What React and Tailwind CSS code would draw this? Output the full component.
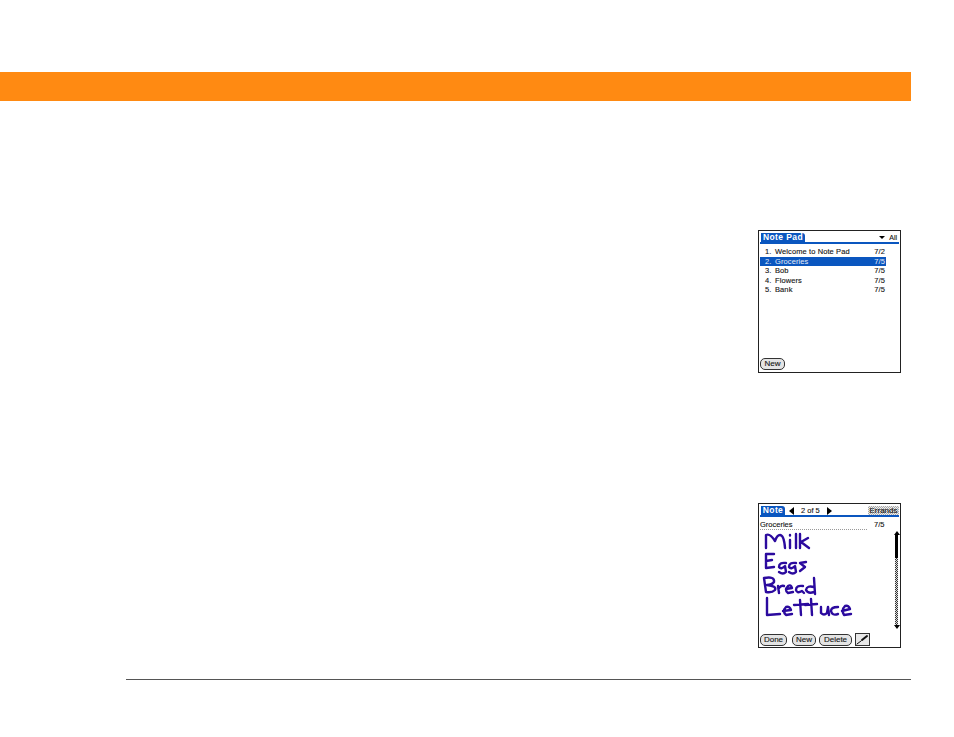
const F = "font-['Liberation_Sans',Arial,sans-serif]";
const T = "[-webkit-text-stroke:0.12px_#222]";

function Btn({ children, className = "" }) {
  return (
    <div className={`flex h-[12px] items-center justify-center rounded-[5px] border border-[#333] bg-[#e4e4e4] text-[8px] leading-none text-[#111] ${T} ${className}`}>
      {children}
    </div>
  );
}

function Row({ n, name, date, active }) {
  return (
    <div className={`flex h-[9.6px] items-center pl-[5px] pr-[1px] text-[7.5px] leading-none tracking-[0.1px] ${active ? "bg-[#0a56bf] text-[#e6edf8]" : `text-[#111] ${T}`}`}>
      <span className="w-[10px]">{n}.</span>
      <span className="flex-1">{name}</span>
      <span>{date}</span>
    </div>
  );
}

function Handwriting() {
  return (
    <svg width="125" height="100" viewBox="0 0 125 100" className="ml-[1px] block" fill="none" stroke="#2b0a9e" strokeWidth="2.4" strokeLinecap="round" strokeLinejoin="round">
      <path d="M5 18 L5 5 Q9 3 14 11 Q16 5 19 5 Q23 5 24 18" />
      <path d="M29 10 L29 18 M29 5 L29 5.5 M35 4 L35 18 M39 4 L39 18 M47 8 L40 12 L48 18" />
      <path d="M13 24 L5 24 L5 38 L13 37 M5 31 L11 30" />
      <path d="M25 33 Q18 32 18 37 Q20 40 24 36 L25 42 Q22 45 18 42 M35 33 Q28 32 28 37 Q30 40 34 36 L35 42 Q32 45 28 42 M45 32 L39 33 L44 37 L39 41" />
      <path d="M3 48 L5 62 M3 48 Q14 46 13 52 Q11 55 6 55 Q16 56 14 60 Q11 63 5 62" />
      <path d="M17 56 L18 63 M18 58 Q20 55 23 56 M25 59 L31 58 Q30 54 27 56 Q23 60 27 63 L32 62 M42 56 Q35 55 35 60 Q36 64 41 61 L43 63 M53 48 L54 64 M53 57 Q46 55 45 60 Q47 64 53 62" />
      <path d="M6 68 L6 85 L19 84" />
      <path d="M22 81 L30 80 Q29 76 25 77 Q21 81 25 85 L31 84 M39 70 L40 85 M33 75 L47 74 M50 69 L51 85 M44 75 L56 74 M60 77 L60 83 Q63 86 66 83 L67 77 L68 85 M77 77 Q70 77 70 81 Q71 86 77 84 M81 81 L89 79 Q88 75 84 76 Q80 80 83 85 L90 84" />
    </svg>
  );
}

function Scrollbar() {
  return (
    <div className="flex w-[5px] flex-col items-center pt-[1px]">
      <div className="h-0 w-0 border-x-[3px] border-b-[4px] border-x-transparent border-b-black" />
      <div className="h-[23px] w-[3px] bg-black" />
      <div className="h-[67px] w-[3px] bg-[repeating-conic-gradient(#333_0_25%,#ddd_0_50%)] bg-[length:2px_2px]" />
      <div className="h-0 w-0 border-x-[3px] border-t-[4px] border-x-transparent border-t-black" />
    </div>
  );
}

export default function App() {
  return (
    <div className={`h-[737px] w-[954px] overflow-hidden bg-white ${F}`}>
      <div className="h-[72px]" />
      <div className="h-[29px] w-[911px] bg-[#ff8a12]" />

      <div className="ml-[758px] mt-[129px] flex h-[143px] w-[143px] flex-col border border-[#222] px-[1px] pt-[2px]">
        <div className="flex h-[11px] items-stretch border-b-[2px] border-[#0a56bf] pl-[1px]">
          <div className="flex w-[44px] items-center justify-center rounded-tr-[3px] bg-[#0a56bf] text-[8.5px] font-bold leading-none tracking-[0.4px] text-white">Note Pad</div>
          <div className={`flex flex-1 items-center justify-end gap-[4px] pr-[2px] text-[7px] leading-none text-[#111] ${T}`}>
            <div className="h-0 w-0 border-x-[3px] border-t-[3px] border-x-transparent border-t-black" />
            <span>All</span>
          </div>
        </div>
        <div className="mt-[3px] w-[126px]">
          <Row n="1" name="Welcome to Note Pad" date="7/2" />
          <Row n="2" name="Groceries" date="7/5" active />
          <Row n="3" name="Bob" date="7/5" />
          <Row n="4" name="Flowers" date="7/5" />
          <Row n="5" name="Bank" date="7/5" />
        </div>
        <div className="mt-[63px] flex">
          <Btn className="w-[25px]">New</Btn>
        </div>
      </div>

      <div className="ml-[758px] mt-[130px] flex h-[145px] w-[143px] flex-col border border-[#222] px-[1px] pt-[2px]">
        <div className="flex h-[11px] items-stretch border-b-[2px] border-[#0a56bf] pl-[1px]">
          <div className="flex w-[24px] items-center justify-center rounded-tr-[3px] bg-[#0a56bf] text-[8.5px] font-bold leading-none tracking-[0.4px] text-white">Note</div>
          <div className={`ml-[4px] flex items-center gap-[7px] text-[7.5px] leading-none text-[#111] ${T}`}>
            <div className="h-0 w-0 border-y-[4px] border-r-[5px] border-y-transparent border-r-black" />
            <span>2 of 5</span>
            <div className="h-0 w-0 border-y-[4px] border-l-[5px] border-y-transparent border-l-black" />
          </div>
          <div className={`ml-auto flex w-[31px] items-center justify-center bg-[repeating-conic-gradient(#aaa_0_25%,#eee_0_50%)] bg-[length:2px_2px] text-[8px] leading-none text-[#111] ${T}`}>Errands</div>
        </div>
        <div className={`mt-[3px] flex h-[10px] items-center text-[7.5px] leading-none text-[#111] ${T}`}>
          <span className="flex h-full w-[107px] items-center border-b border-dotted border-[#999]">Groceries</span>
          <span className="ml-[7px]">7/5</span>
        </div>
        <div className="flex h-[100px]">
          <Handwriting />
          <div className="ml-[8px]"><Scrollbar /></div>
        </div>
        <div className="mt-[3px] flex items-center">
          <Btn className="w-[27px]">Done</Btn>
          <Btn className="ml-[5px] w-[24px]">New</Btn>
          <Btn className="ml-[3px] w-[33px]">Delete</Btn>
          <div className="ml-[3px] flex h-[13px] w-[15px] items-center justify-center border border-[#333] bg-[#e8e8e8]">
            <svg width="13" height="11" viewBox="0 0 13 11" fill="none" stroke="#111" strokeLinecap="round">
              <path d="M1 10 L5 7" strokeWidth="1" />
              <path d="M6 6 L11 2" strokeWidth="2" />
            </svg>
          </div>
        </div>
      </div>

      <div className="ml-[126px] mt-[31px] h-px w-[785px] bg-[#555]" />
    </div>
  );
}
